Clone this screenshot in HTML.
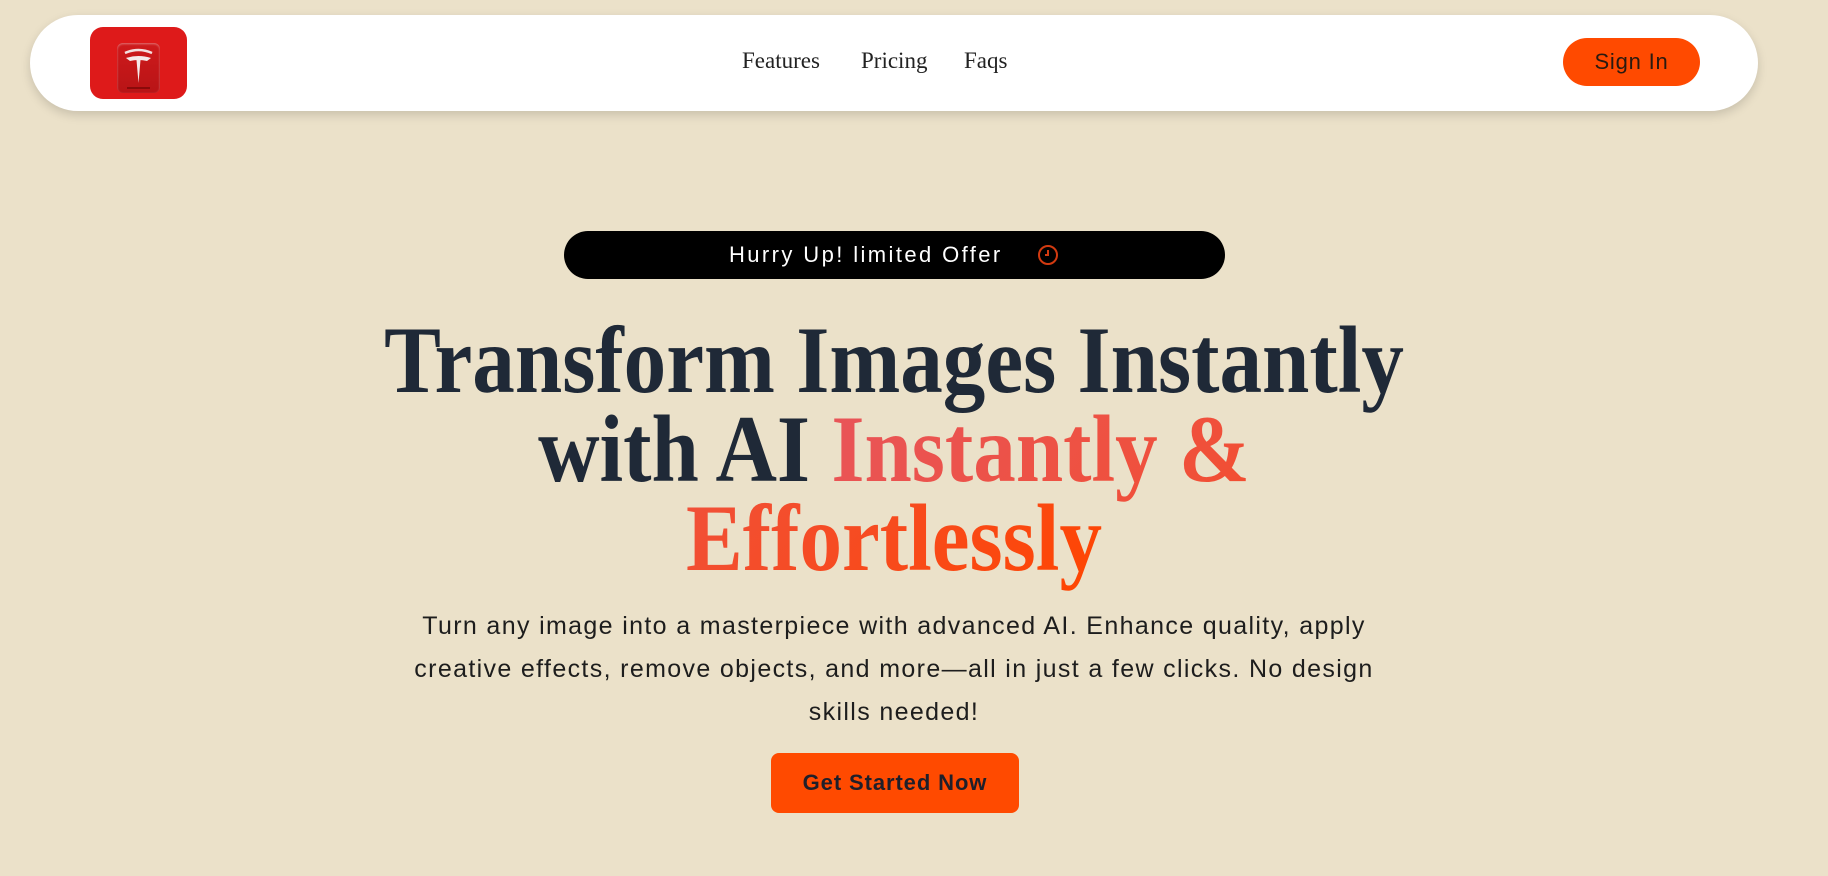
<!DOCTYPE html>
<html><head><meta charset="utf-8"><style>
html,body{margin:0;padding:0}
body{width:1828px;height:876px;background:#ebe1c9;overflow:hidden;position:relative;font-family:"Liberation Sans",sans-serif}
.nav{position:absolute;left:30px;top:15px;width:1728px;height:96px;background:#fff;border-radius:48px;box-shadow:0 4px 10px rgba(0,0,0,.15)}
.logo{position:absolute;left:60px;top:12px;width:97px;height:72px;border-radius:13px;background:#de1a1a;overflow:hidden}
.logo .in{position:absolute;left:27px;top:16px;width:43px;height:50px;border-radius:6px;background:linear-gradient(#cf1a1c,#b81416);box-shadow:inset 0 1px 2px rgba(255,255,255,.4)}
.links{position:absolute;top:0;left:0;width:100%;height:96px;font-family:"Liberation Serif",serif;font-size:23px;color:#222}
.links span{position:absolute;top:33px}
.signin{position:absolute;left:1533px;top:23px;width:137px;height:48px;border-radius:24px;background:#ff4a00;color:#2a1a10;font-size:22px;letter-spacing:.8px;line-height:48px;text-align:center}
.badge{position:absolute;left:564px;top:231px;width:661px;height:48px;border-radius:24px;background:#000;color:#fff;font-size:22px;line-height:48px;letter-spacing:2.4px}
h1{position:absolute;left:0;width:1788px;top:316px;margin:0;text-align:center;font-family:"Liberation Serif",serif;font-weight:bold;font-size:95px;line-height:89px;color:#1f2937;transform:scaleX(0.896);transform-origin:894px 0}
.g{background:linear-gradient(135deg,#e8555a 0%,#f0503a 45%,#ff4500 100%);-webkit-background-clip:text;background-clip:text;color:transparent}
p{position:absolute;left:0;width:1788px;top:605px;margin:0;text-align:center;font-size:25px;letter-spacing:1.35px;line-height:43px;color:#1d1d1d}
.btn{position:absolute;left:771px;top:753px;width:248px;height:60px;border-radius:8px;background:#ff4a00;color:#1f1f2a;font-size:22px;font-weight:bold;letter-spacing:.9px;line-height:60px;text-align:center}
</style></head><body>
<div class="nav">
  <div class="logo"><div class="in">
    <svg width="43" height="50" viewBox="0 0 43 50"><path d="M8 10 Q21.5 4 35 10" stroke="#f3e0e0" stroke-width="2.5" fill="none"/><path d="M9 15 Q21.5 11 34 15 L30 18 Q21.5 16 13 18Z" fill="#f5eaea"/><path d="M19.5 17 L23.5 17 L21.5 40Z" fill="#f5eaea"/><rect x="10" y="44" width="23" height="2" fill="#8a0a0a"/></svg>
  </div></div>
  <div class="links"><span style="left:712px">Features</span><span style="left:831px">Pricing</span><span style="left:934px">Faqs</span></div>
  <div class="signin">Sign In</div>
</div>
<div class="badge"><span style="position:absolute;left:165px">Hurry Up! limited Offer</span>
<svg style="position:absolute;left:473px;top:13px" width="22" height="22" viewBox="0 0 22 22"><circle cx="11" cy="11" r="9" stroke="#d23a10" stroke-width="2" fill="none"/><path d="M11 6 V11 H8" stroke="#d23a10" stroke-width="2" fill="none"/></svg></div>
<h1>Transform Images Instantly<br>with AI <span class="g">Instantly &amp;<br>Effortlessly</span></h1>
<p>Turn any image into a masterpiece with advanced AI. Enhance quality, apply<br>creative effects, remove objects, and more—all in just a few clicks. No design<br>skills needed!</p>
<div class="btn">Get Started Now</div>
</body></html>
